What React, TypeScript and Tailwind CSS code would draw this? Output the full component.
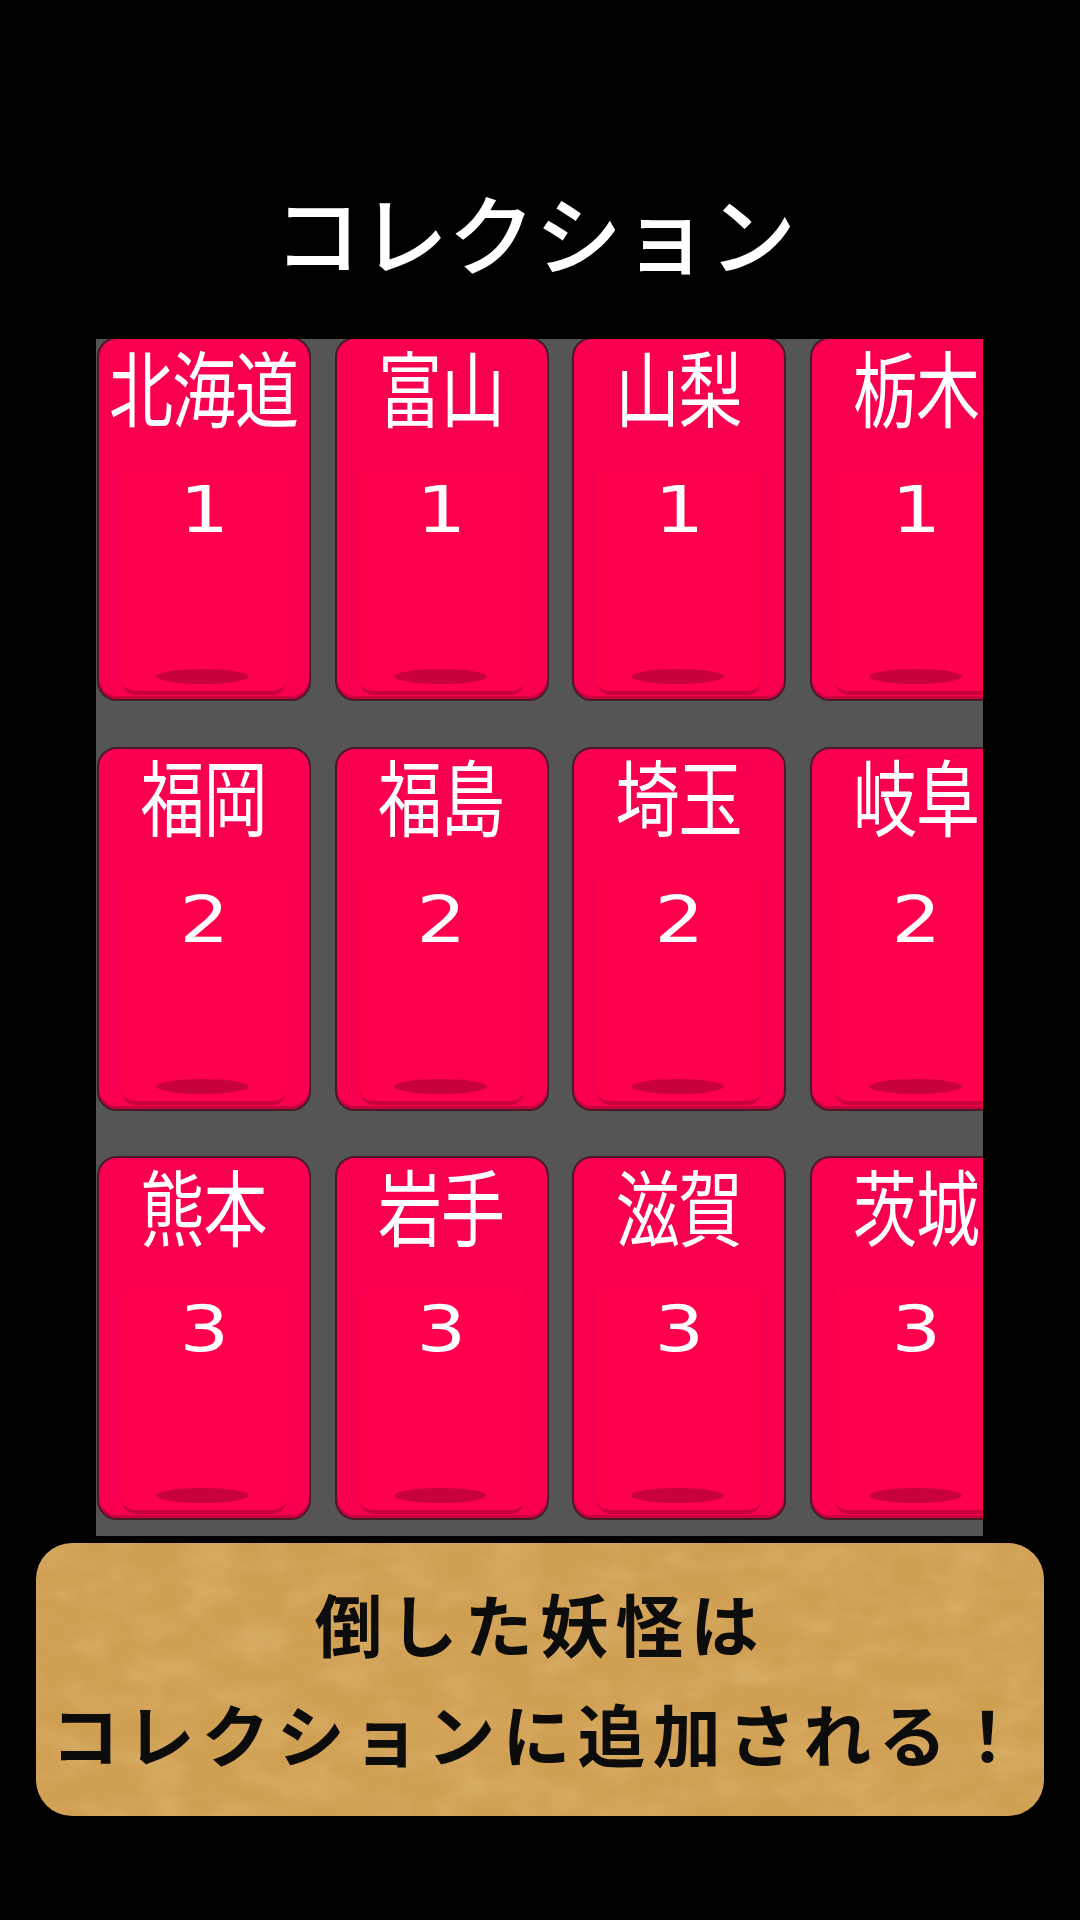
const CARDS: Array<{ name: string; rank: number }> = [
  { name: '北海道', rank: 1 },
  { name: '富山', rank: 1 },
  { name: '山梨', rank: 1 },
  { name: '栃木', rank: 1 },
  { name: '福岡', rank: 2 },
  { name: '福島', rank: 2 },
  { name: '埼玉', rank: 2 },
  { name: '岐阜', rank: 2 },
  { name: '熊本', rank: 3 },
  { name: '岩手', rank: 3 },
  { name: '滋賀', rank: 3 },
  { name: '茨城', rank: 3 },
];

const JP = "font-['Noto_Sans_CJK_JP','Noto_Sans',sans-serif]";

function Card({ name, rank }: { name: string; rank: number }) {
  return (
    <div className="flex h-[364px] w-[214px] flex-col items-center rounded-[20px] border-2 border-[#4a1a2a] bg-[#f8004f] shadow-[inset_0_-3px_0_#c8003c]">
      <div className={`${JP} flex h-[131px] w-full items-center justify-center pr-[1px] pb-[40px] text-[64px] leading-none tracking-[-1px] whitespace-nowrap text-white`}>
        <span className="inline-block scale-y-[1.3]">{name}</span>
      </div>
      <div className="relative mb-[4px] flex w-[164px] flex-1 flex-col items-center rounded-b-[14px] border-b-[4px] border-[#c8003c] bg-[#ff004c]">
        <span className="mt-[2px] inline-block scale-x-[1.22] font-['DejaVu_Sans',sans-serif] text-[64px] leading-[76px] text-white">{rank}</span>
        <div className="absolute bottom-[7px] left-[34px] h-[15px] w-[93px] rounded-[50%] bg-[#c8003c]" />
      </div>
    </div>
  );
}

export default function App() {
  return (
    <div className="flex h-[1920px] w-[1080px] flex-col overflow-hidden bg-black">
      {/* Title */}
      <div className={`${JP} flex h-[339px] items-center justify-center pt-[124px] pr-[10px] text-[87px] leading-none font-medium text-white`}>
        コレクション
      </div>

      {/* Card grid, last column runs off the panel */}
      <div className="ml-[96px] h-[1197px] w-[887px] overflow-hidden bg-[#555555] pl-px">
        <div className="-mt-[2px] grid w-[952px] grid-cols-[repeat(4,214px)] gap-x-[23.5px] gap-y-[45.5px]">
          {CARDS.map((card) => (
            <Card key={card.name} name={card.name} rank={card.rank} />
          ))}
        </div>
      </div>

      {/* Wood message panel */}
      <div className={`${JP} relative mt-[7px] ml-[36px] flex h-[273px] w-[1008px] flex-col items-center justify-center overflow-hidden rounded-[36px] bg-[#cf9f52] pb-[4px] text-[68px] leading-[110px] font-bold tracking-[7.2px] text-[#0c0c0c]`}>
        <svg className="absolute inset-0 h-full w-full opacity-25" aria-hidden="true">
          <filter id="wood">
            <feTurbulence type="fractalNoise" baseFrequency="0.02 0.035" numOctaves="3" seed="4" />
            <feColorMatrix values="0 0 0 0 0.95  0 0 0 0 0.72  0 0 0 0 0.40  1.6 0 0 0 -0.55" />
          </filter>
          <rect width="100%" height="100%" filter="url(#wood)" />
        </svg>
        <span className="relative">倒した妖怪は</span>
        <span className="relative whitespace-nowrap">コレクションに追加される！</span>
      </div>
    </div>
  );
}
